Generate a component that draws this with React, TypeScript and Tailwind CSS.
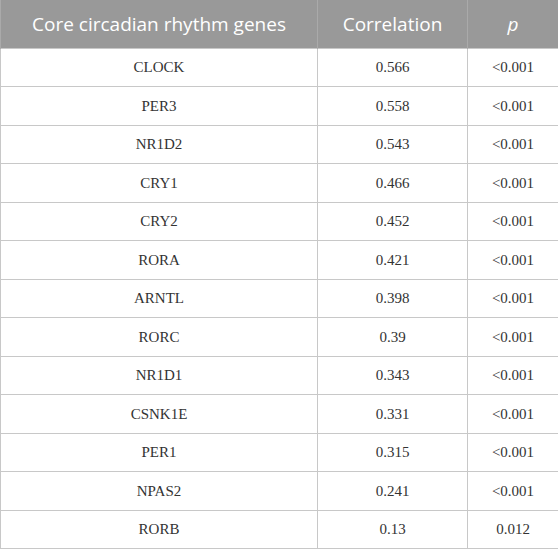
import React from "react";

const rows: [string, string, string][] = [
  ["CLOCK", "0.566", "<0.001"],
  ["PER3", "0.558", "<0.001"],
  ["NR1D2", "0.543", "<0.001"],
  ["CRY1", "0.466", "<0.001"],
  ["CRY2", "0.452", "<0.001"],
  ["RORA", "0.421", "<0.001"],
  ["ARNTL", "0.398", "<0.001"],
  ["RORC", "0.39", "<0.001"],
  ["NR1D1", "0.343", "<0.001"],
  ["CSNK1E", "0.331", "<0.001"],
  ["PER1", "0.315", "<0.001"],
  ["NPAS2", "0.241", "<0.001"],
  ["RORB", "0.13", "0.012"],
];

export default function App() {
  return (
    <div className="w-[558px] h-[550px] bg-white">
      <table className="w-[558px] table-fixed border-collapse">
        <colgroup>
          <col className="w-[317px]" />
          <col className="w-[150px]" />
          <col className="w-[91px]" />
        </colgroup>
        <thead>
          <tr className="h-[48px] bg-[#999999] text-white text-[19px] font-['Open_Sans',sans-serif]">
            <th className="font-normal text-center border-x border-[#aaaaaa]">Core circadian rhythm genes</th>
            <th className="font-normal text-center border-x border-[#aaaaaa]">Correlation</th>
            <th className="font-normal italic text-center border-x border-[#aaaaaa]">p</th>
          </tr>
        </thead>
        <tbody className="text-[15px] text-[#333333] font-['Liberation_Serif',serif]">
          {rows.map((r) => (
            <tr key={r[0]} className="h-[38.5px]">
              <td className="text-center border border-[#c8c8c8]">{r[0]}</td>
              <td className="text-center border border-[#c8c8c8]">{r[1]}</td>
              <td className="text-center border border-[#c8c8c8]">{r[2]}</td>
            </tr>
          ))}
        </tbody>
      </table>
    </div>
  );
}
